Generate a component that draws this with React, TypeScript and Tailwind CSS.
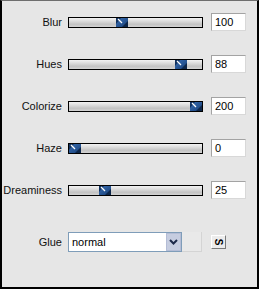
interface sliderType {
  label: string;
  value: number;
  max: number;
}

const sliders: sliderType[] = [
  { label: "Blur", value: 100, max: 255 },
  { label: "Hues", value: 88, max: 100 },
  { label: "Colorize", value: 200, max: 200 },
  { label: "Haze", value: 0, max: 100 },
  { label: "Dreaminess", value: 25, max: 100 },
];

const Thumb = () => (
  <svg width="12" height="9" viewBox="0 0 12 9" className="block">
    <defs>
      <linearGradient id="thumbFill" x1="0" y1="0" x2="1" y2="1">
        <stop offset="0" stopColor="#3a6fb3" />
        <stop offset="1" stopColor="#173f78" />
      </linearGradient>
    </defs>
    <rect width="12" height="9" fill="url(#thumbFill)" />
    <polygon points="0,0 5,0 0,6" fill="#12325f" />
    <polygon points="12,3 12,9 6,9" fill="#0d2649" />
    <line x1="2" y1="1" x2="6" y2="5" stroke="#ffffff" strokeWidth="1.2" />
  </svg>
);

const Slider = ({ value, max }: { value: number; max: number }) => {
  const left = Math.round((value / max) * 121);
  return (
    <div className="w-[135px] h-[11px] border border-black bg-[linear-gradient(to_bottom,#f2f2f2_0%,#dcdcdc_35%,#c3c3c3_70%,#d3d3d3_100%)]">
      <div style={{ marginLeft: left }} className="w-[12px] h-[9px]">
        <Thumb />
      </div>
    </div>
  );
};

export default function App() {
  return (
    <div
      className="w-[259px] h-[289px] bg-[#e6e6e6] border-l-2 border-r-2 border-b-2 border-t border-black border-t-[#6e6e6e] text-[11px] text-[#111]"
      style={{ fontFamily: '"Liberation Sans", Arial, sans-serif' }}
    >
      <div className="flex flex-col pt-[11px] gap-[22px]">
        {sliders.map((s, i) => (
          <div key={i} className="flex items-center h-[20px]">
            <p className="w-[60px] text-right">{s.label}</p>
            <div className="ml-[6px]">
              <Slider value={s.value} max={s.max} />
            </div>
            <div className="ml-[8px] w-[35px] h-[18px] bg-white border border-[#a3a3a3] border-r-[#d8d8d8] border-b-[#d8d8d8] pl-[3px] leading-[16px] text-black">
              {s.value}
            </div>
          </div>
        ))}
      </div>
      <div className="flex items-center h-[20px] mt-[32px]">
        <p className="w-[60px] text-right">Glue</p>
        <div className="ml-[6px] flex w-[114px] h-[20px] bg-white border border-[#7f9db9]">
          <span className="flex-1 pl-[3px] leading-[18px] text-black">normal</span>
          <div className="w-[15px] h-[18px] bg-[#c6cde0] border border-[#b4bdd6] flex items-center justify-center">
            <svg width="9" height="6" viewBox="0 0 9 6">
              <polyline points="1,1 4.5,4.5 8,1" fill="none" stroke="#1d2a4a" strokeWidth="2" />
            </svg>
          </div>
        </div>
        <div className="w-[20px] h-[20px] bg-[#e9e9e9] border-r border-b border-[#d4d4d4]" />
        <div className="ml-[9px] w-[15px] h-[14px] bg-[#ececec] border border-white border-r-[#7a7a7a] border-b-[#7a7a7a] flex items-center justify-center">
          <span className="rotate-90 font-bold text-[10px] leading-none text-black">S</span>
        </div>
      </div>
    </div>
  );
}
